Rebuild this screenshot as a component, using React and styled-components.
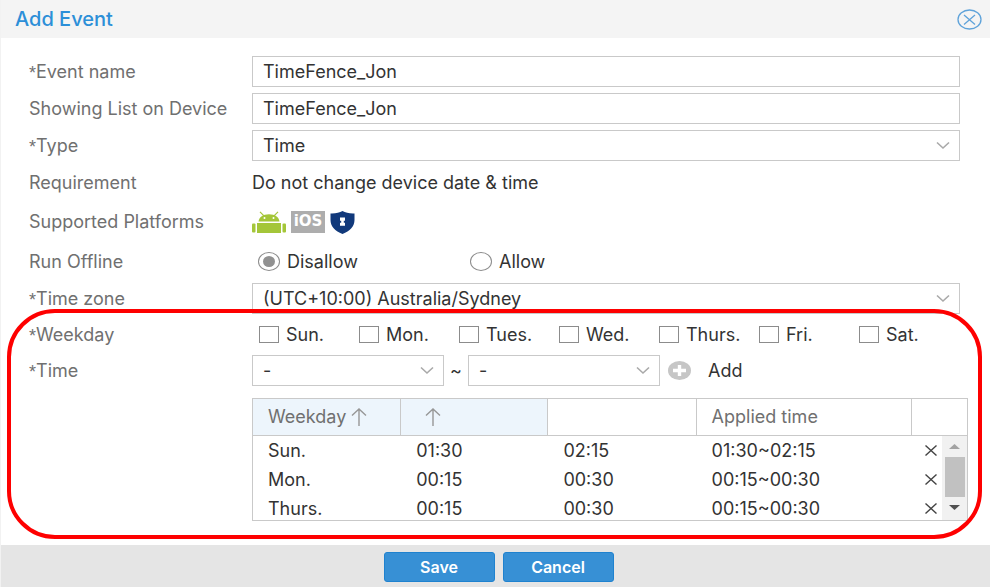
import React, { useState } from "react";
import styled, { createGlobalStyle, css } from "styled-components";

const Global = createGlobalStyle`
  *, *::before, *::after { box-sizing: border-box; }
  body {
    margin: 0;
    background: #fff;
    color: #333;
    font-family: Inter, sans-serif;
    font-size: 18px;
    line-height: 24px;
  }
  button, input, select { font: inherit; color: inherit; }
`;

const LINE = "#c9c9c9";

const Dialog = styled.form`
  min-height: 100vh;
  display: flex;
  flex-direction: column;
  border-left: 1px solid #f2f2f2;
`;

const Header = styled.header`
  display: flex;
  align-items: center;
  justify-content: space-between;
  height: 38px;
  padding: 0 8px 0 14px;
  background: #f4f4f4;
`;

const Title = styled.h1`
  margin: 0;
  font-size: 20px;
  font-weight: 500;
  color: #2c8fd8;
`;

const PlainButton = styled.button`
  display: inline-flex;
  align-items: center;
  justify-content: center;
  gap: 17px;
  padding: 0;
  border: 0;
  background: none;
  cursor: pointer;
`;

const Body = styled.main`
  flex: 1;
  display: flex;
  flex-direction: column;
  gap: 6px;
  padding: 18px 22px 24px 28px;
`;

const Row = styled.div`
  display: grid;
  grid-template-columns: 223px minmax(0, 1fr);
  align-items: center;
  min-height: ${(p) => p.$height || 31}px;
  margin-right: 8px;
`;

const labelStyle = css`
  color: #707070;
`;
const Label = styled.label`${labelStyle}`;
const LabelText = styled.span`${labelStyle}`;

const Star = styled.span`
  font-family: "Liberation Sans", sans-serif;
  font-size: 18px;
  line-height: 1;
  vertical-align: -1px;
`;

const TextInput = styled.input`
  display: block;
  width: 100%;
  height: 31px;
  padding: 0 10px;
  border: 1px solid ${LINE};
  border-radius: 0;
  background: #fff;
`;

const SelectWrap = styled.div`
  position: relative;
  flex: ${(p) => (p.$width ? `0 1 ${p.$width}px` : "1")};

  svg {
    position: absolute;
    right: 10px;
    top: 11px;
    pointer-events: none;
  }
`;

const SelectBox = styled.select`
  display: block;
  appearance: none;
  width: 100%;
  height: 31px;
  padding: 0 30px 0 10px;
  border: 1px solid ${LINE};
  border-radius: 0;
  background: #fff;
`;

const Inline = styled.div`
  display: flex;
  align-items: center;
  gap: ${(p) => p.$gap || 0}px;
`;

const Options = styled.div`
  display: grid;
  grid-template-columns: repeat(${(p) => p.$count}, minmax(0, ${(p) => p.$width}px));
  padding-left: ${(p) => p.$inset}px;
`;

const Option = styled.label`
  display: flex;
  align-items: center;
  gap: 7px;
  white-space: nowrap;
`;

const CheckBox = styled.input`
  appearance: none;
  flex: none;
  width: 20px;
  height: 17px;
  margin: 0;
  border: 1px solid #8c8c8c;
  background: ${(p) => (p.checked ? "#8c8c8c" : "#fff")};
`;

const Radio = styled.input`
  appearance: none;
  flex: none;
  width: 22px;
  height: 19px;
  margin: 0;
  border: 1px solid #8c8c8c;
  border-radius: 50%;
  background: #fff;

  &:checked {
    background: #919191;
    background-clip: content-box;
    padding: 3px 4px;
  }
`;

const Tilde = styled.span`
  width: 24px;
  text-align: center;
`;

const AddSlot = styled.div`
  display: flex;
  margin-left: 8px;
`;

const TableFrame = styled.div`
  position: relative;
  margin: 6px 0 0 223px;
  border: 1px solid ${LINE};
`;

const Table = styled.table`
  display: block;

  thead, tbody { display: block; }
  tbody { height: 84px; overflow: hidden; }
  tr {
    display: grid;
    grid-template-columns: 148fr 147fr 148fr 215fr 55fr;
  }
`;

const HeadCell = styled.th`
  display: flex;
  align-items: center;
  gap: 5px;
  height: 37px;
  padding: 0 15px;
  border-right: 1px solid ${LINE};
  border-bottom: 1px solid ${LINE};
  background: ${(p) => (p.$sorted ? "#edf5fc" : "#fff")};
  color: #707070;
  font-weight: 400;

  &:last-child { border-right: 0; }
`;

const SortSlot = styled.span`
  display: flex;
  padding-left: 9px;
`;

const Cell = styled.td`
  display: flex;
  align-items: center;
  height: 29px;
  padding: 0 0 0 ${(p) => (p.$action ? 13 : 15)}px;
`;

const ScrollBar = styled.div`
  position: absolute;
  right: 0;
  bottom: 0;
  width: 25px;
  height: 84px;
  display: flex;
  flex-direction: column;
  align-items: center;
  background: #f1f1f1;
`;

const ScrollArrow = styled(PlainButton)`
  width: 100%;
  flex: 0 0 21px;
`;

const Thumb = styled.div`
  width: 20px;
  height: 40px;
  background: #c1c1c1;
`;

const Footer = styled.footer`
  display: flex;
  justify-content: center;
  gap: 8px;
  height: 42px;
  padding: 7px 0 4px 6px;
  background: #e5e5e5;
`;

const ActionButton = styled.button`
  width: 111px;
  height: 30px;
  padding: 0;
  border: 1px solid #1f82cf;
  border-radius: 3px;
  background: #3790d5;
  color: #fff;
  font-size: 16px;
  font-weight: 600;
  cursor: pointer;
`;

const Highlight = styled.div`
  position: absolute;
  inset: -11px 8px -18px 6px;
  border: 4px solid #fe0000;
  border-radius: 48px;
  pointer-events: none;
`;

const Schedule = styled.section`
  position: relative;
  display: flex;
  flex-direction: column;
  gap: 6px;
  margin: 0 -22px 0 -28px;
  padding: 0 22px 0 28px;
`;

const Chevron = () => (
  <svg width="14" height="9" viewBox="0 0 14 9" fill="none" stroke="#a9a9a9" strokeWidth="1.6">
    <path d="M1 1.5 7 7l6-5.5" />
  </svg>
);

const SortArrow = () => (
  <svg width="16" height="20" viewBox="0 0 16 20" fill="none" stroke="#979797" strokeWidth="1.4">
    <path d="M8 19V2M1 8.500 8 2l7 6.500" />
  </svg>
);

const Cross = () => (
  <svg width="12" height="11" viewBox="0 0 12 11" stroke="#444" strokeWidth="1.4">
    <path d="m.5.5 11 10M11.500.5.5 10.500" />
  </svg>
);

const Android = () => (
  <svg width="34" height="23" viewBox="0 0 34 23" role="img" aria-label="Android">
    <g fill="#a4c639">
      <path d="M6.500 10.500C7 6 11 3.200 17 3.200S27 6 27.500 10.500Z" />
      <path d="M5 12h24v10H5z" />
      <rect x="0" y="12.500" width="3.500" height="9" rx="1" />
      <rect x="30.500" y="12.500" width="3.500" height="9" rx="1" />
    </g>
    <path d="m8 .8 4 4M26 .8l-4 4" stroke="#a4c639" strokeWidth="1.2" />
    <g fill="#fff">
      <circle cx="12.500" cy="7" r="1" />
      <circle cx="21.500" cy="7" r="1" />
    </g>
  </svg>
);

const IosBadge = styled.span`
  width: 34px;
  height: 22px;
  background: #adadad;
  color: #fff;
  font-family: "DejaVu Sans", sans-serif;
  font-size: 15px;
  font-weight: 700;
  line-height: 21px;
  text-align: center;
`;

const Shield = () => (
  <svg width="25" height="23" viewBox="0 0 25 23" role="img" aria-label="Shield">
    <path
      d="M12.500 0C9.500 1.800 5.500 2.600.5 2.400V9c0 6.500 4.500 11 12 14 7.500-3 12-7.500 12-14V2.400C19.500 2.600 15.500 1.800 12.500 0Z"
      fill="#11397b"
    />
    <path d="M10 6.500h5v3.200h-1.200v2h1.200v3h-5v-3h1.200v-2H10Z" fill="#fff" />
  </svg>
);

const DAYS = ["Sun.", "Mon.", "Tues.", "Wed.", "Thurs.", "Fri.", "Sat."];

const ENTRIES = [
  { day: "Sun.", from: "01:30", to: "02:15" },
  { day: "Mon.", from: "00:15", to: "00:30" },
  { day: "Thurs.", from: "00:15", to: "00:30" },
];

function Select({ id, value, width, label }) {
  return (
    <SelectWrap $width={width}>
      <SelectBox id={id} aria-label={label} defaultValue={value}>
        <option>{value}</option>
      </SelectBox>
      <Chevron />
    </SelectWrap>
  );
}

export default function App() {
  const [days, setDays] = useState([]);
  const toggle = (day) =>
    setDays(days.includes(day) ? days.filter((d) => d !== day) : [...days, day]);

  return (
    <Dialog onSubmit={(e) => e.preventDefault()}>
      <Global />
      <Header>
        <Title>Add Event</Title>
        <PlainButton type="button" aria-label="Close">
          <svg width="25" height="21" viewBox="0 0 25 21" fill="none" stroke="#5fa3da" strokeWidth="1.3">
            <ellipse cx="12.500" cy="10.500" rx="11.500" ry="9.500" />
            <path d="m7 6 11 9.500M18 6 7 15.500" />
          </svg>
        </PlainButton>
      </Header>

      <Body>
        <Row>
          <Label htmlFor="name"><Star>*</Star>Event name</Label>
          <TextInput id="name" defaultValue="TimeFence_Jon" />
        </Row>
        <Row>
          <Label htmlFor="listing">Showing List on Device</Label>
          <TextInput id="listing" defaultValue="TimeFence_Jon" />
        </Row>
        <Row>
          <Label htmlFor="type"><Star>*</Star>Type</Label>
          <Select id="type" value="Time" />
        </Row>
        <Row>
          <LabelText>Requirement</LabelText>
          <span>Do not change device date &amp; time</span>
        </Row>
        <Row $height={36}>
          <LabelText>Supported Platforms</LabelText>
          <Inline $gap={5}>
            <Android />
            <IosBadge>iOS</IosBadge>
            <Shield />
          </Inline>
        </Row>
        <Row>
          <LabelText>Run Offline</LabelText>
          <Options $count={2} $width={212} $inset={6}>
            <Option><Radio type="radio" name="offline" defaultChecked />Disallow</Option>
            <Option><Radio type="radio" name="offline" />Allow</Option>
          </Options>
        </Row>
        <Row>
          <Label htmlFor="zone"><Star>*</Star>Time zone</Label>
          <Select id="zone" value="(UTC+10:00) Australia/Sydney" />
        </Row>

        <Schedule>
          <Row $height={29}>
            <LabelText><Star>*</Star>Weekday</LabelText>
            <Options $count={7} $width={100} $inset={7}>
              {DAYS.map((day) => (
                <Option key={day}>
                  <CheckBox type="checkbox" checked={days.includes(day)} onChange={() => toggle(day)} />
                  {day}
                </Option>
              ))}
            </Options>
          </Row>
          <Row>
            <Label htmlFor="start"><Star>*</Star>Time</Label>
            <Inline>
              <Select id="start" value="-" width={192} />
              <Tilde>~</Tilde>
              <Select id="end" label="End time" value="-" width={192} />
              <AddSlot>
                <PlainButton type="button">
                  <svg width="23" height="19" viewBox="0 0 23 19">
                    <ellipse cx="11.500" cy="9.500" rx="11.500" ry="9.500" fill="#c6c6c6" />
                    <path d="M11.500 4v11M5 9.500h13" stroke="#fff" strokeWidth="3.400" />
                  </svg>
                  Add
                </PlainButton>
              </AddSlot>
            </Inline>
          </Row>
          <TableFrame>
            <Table>
              <thead>
                <tr>
                  <HeadCell $sorted>Weekday<SortArrow /></HeadCell>
                  <HeadCell $sorted><SortSlot><SortArrow /></SortSlot></HeadCell>
                  <HeadCell />
                  <HeadCell>Applied time</HeadCell>
                  <HeadCell />
                </tr>
              </thead>
              <tbody>
                {ENTRIES.map(({ day, from, to }) => (
                  <tr key={day}>
                    <Cell>{day}</Cell>
                    <Cell>{from}</Cell>
                    <Cell>{to}</Cell>
                    <Cell>{from}~{to}</Cell>
                    <Cell $action>
                      <PlainButton type="button" aria-label={`Remove ${day}`}><Cross /></PlainButton>
                    </Cell>
                  </tr>
                ))}
              </tbody>
            </Table>
            <ScrollBar>
              <ScrollArrow type="button" aria-label="Scroll up">
                <svg width="11" height="5" viewBox="0 0 11 5"><path d="M0 5 5.500 0 11 5Z" fill="#a3a3a3" /></svg>
              </ScrollArrow>
              <Thumb />
              <ScrollArrow type="button" aria-label="Scroll down">
                <svg width="11" height="5" viewBox="0 0 11 5"><path d="M0 0 5.500 5 11 0Z" fill="#505050" /></svg>
              </ScrollArrow>
            </ScrollBar>
          </TableFrame>
          <Highlight />
        </Schedule>
      </Body>

      <Footer>
        <ActionButton type="submit">Save</ActionButton>
        <ActionButton type="button">Cancel</ActionButton>
      </Footer>
    </Dialog>
  );
}
